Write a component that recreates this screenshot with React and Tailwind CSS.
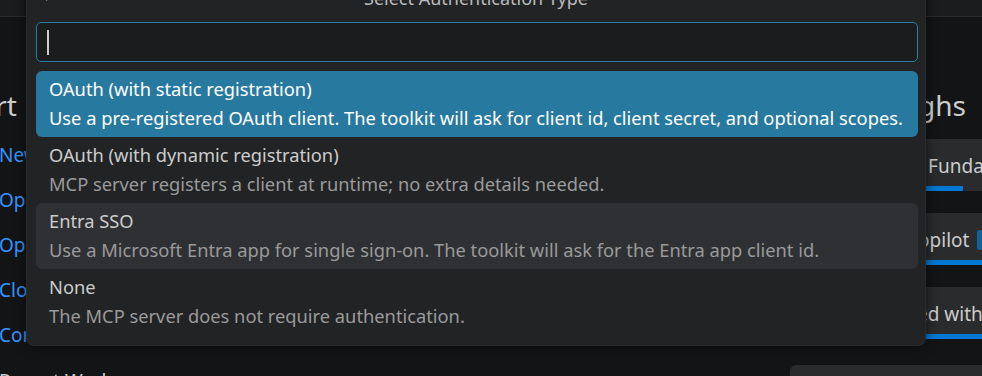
import React from 'react';

const options = [
  {
    label: 'OAuth (with static registration)',
    detail: 'Use a pre-registered OAuth client. The toolkit will ask for client id, client secret, and optional scopes.',
    state: 'selected',
  },
  {
    label: 'OAuth (with dynamic registration)',
    detail: 'MCP server registers a client at runtime; no extra details needed.',
    state: 'idle',
  },
  {
    label: 'Entra SSO',
    detail: 'Use a Microsoft Entra app for single sign-on. The toolkit will ask for the Entra app client id.',
    state: 'hover',
  },
  {
    label: 'None',
    detail: 'The MCP server does not require authentication.',
    state: 'idle',
  },
];

const links = ['New File...', 'Open File...', 'Open Folder...', 'Clone Git Repository...', 'Connect to...'];

function Walkthrough({ title, progress, badge }) {
  return (
    <div className="relative h-[52px] overflow-hidden rounded-[4px] bg-[#2a2b2d]">
      <div className="flex h-full items-center gap-2 pl-[78px] pt-[2px] text-[19px] text-[#cccccc]">
        <span>{title}</span>
        {badge && <span className="rounded-[3px] bg-[#0e639c] px-1 text-[13px] text-white">{badge}</span>}
      </div>
      <div className="absolute bottom-0 left-0 h-[5px] bg-[#0078d4]" style={{ width: progress }} />
    </div>
  );
}

function QuickPick() {
  return (
    <div className="absolute left-[26px] top-[-12px] flex h-[358px] w-[900px] flex-col rounded-[8px] border border-[#2a2b2d] bg-[#222325] shadow-[0_0_12px_rgba(0,0,0,0.6)]">
      <div className="relative flex h-[30px] items-center justify-center pb-[12px] text-[18px] text-[#bbbbbb]">
        <svg className="absolute left-[14px] top-[1px]" width="14" height="14" viewBox="0 0 16 16" fill="none" stroke="#a0a0a0" strokeWidth="1.3">
          <path d="M13 8H3M7 4L3 8l4 4" />
        </svg>
        Select Authentication Type
      </div>
      <div className="ml-[9px] mr-[7px] mt-[3px] flex h-[40px] items-center rounded-[5px] border border-[#2b7a9f] bg-[#1b1c1e] pl-[10px]">
        <div className="h-[25px] w-[2px] bg-[#cccccc]" />
      </div>
      <div className="ml-[9px] mr-[7px] mt-[9px] flex flex-col">
        {options.map((o) => (
          <div
            key={o.label}
            className={
              'flex h-[66px] flex-col rounded-[6px] pl-[13px] pt-[3px] ' +
              (o.state === 'selected' ? 'bg-[#27799f]' : o.state === 'hover' ? 'bg-[#2f3033]' : '')
            }
          >
            <div className={'text-[18.3px] leading-[29px] ' + (o.state === 'selected' ? 'text-white' : 'text-[#cccccc]')}>{o.label}</div>
            <div className={'text-[18.3px] leading-[29px] ' + (o.state === 'selected' ? 'text-white' : 'text-[#9a9a9a]')}>{o.detail}</div>
          </div>
        ))}
      </div>
    </div>
  );
}

export default function App() {
  return (
    <div className="relative h-[376px] w-[982px] overflow-hidden bg-[#131416] font-['Noto_Sans',sans-serif]">
      <div className="flex h-[17px] border-b border-[#2a2b2d] bg-[#1b1c1e]" />
      <div className="flex">
        <div className="ml-[-46px] mt-[68px] flex w-[300px] shrink-0 flex-col">
          <div className="text-[28px] leading-[40px] text-[#cccccc]">Start</div>
          <div className="ml-[45px] mt-[18px] flex flex-col gap-[21px] text-[19px] leading-[24px] text-[#3794ff]">
            {links.map((l) => (
              <span key={l}>{l}</span>
            ))}
          </div>
          <div className="ml-[45px] mt-[22px] text-[19px] leading-[24px] text-[#cccccc]">Recent Workspaces</div>
        </div>
        <div className="ml-[506px] mt-[68px] flex w-[420px] shrink-0 flex-col">
          <div className="pl-[22px] text-[28px] leading-[40px] text-[#cccccc]">Walkthroughs</div>
          <div className="mt-[14px] flex flex-col gap-[22px]">
            <Walkthrough title="Learn the Fundamentals" progress="203px" />
            <Walkthrough title="GitHub Copilot" progress="100%" badge="Updated" />
            <Walkthrough title="Get Started with Python" progress="100%" />
          </div>
        </div>
      </div>
      <div className="absolute left-[790px] top-[365px] h-[40px] w-[300px] rounded-[6px] bg-[#2a2b2d]" />
      <QuickPick />
    </div>
  );
}
